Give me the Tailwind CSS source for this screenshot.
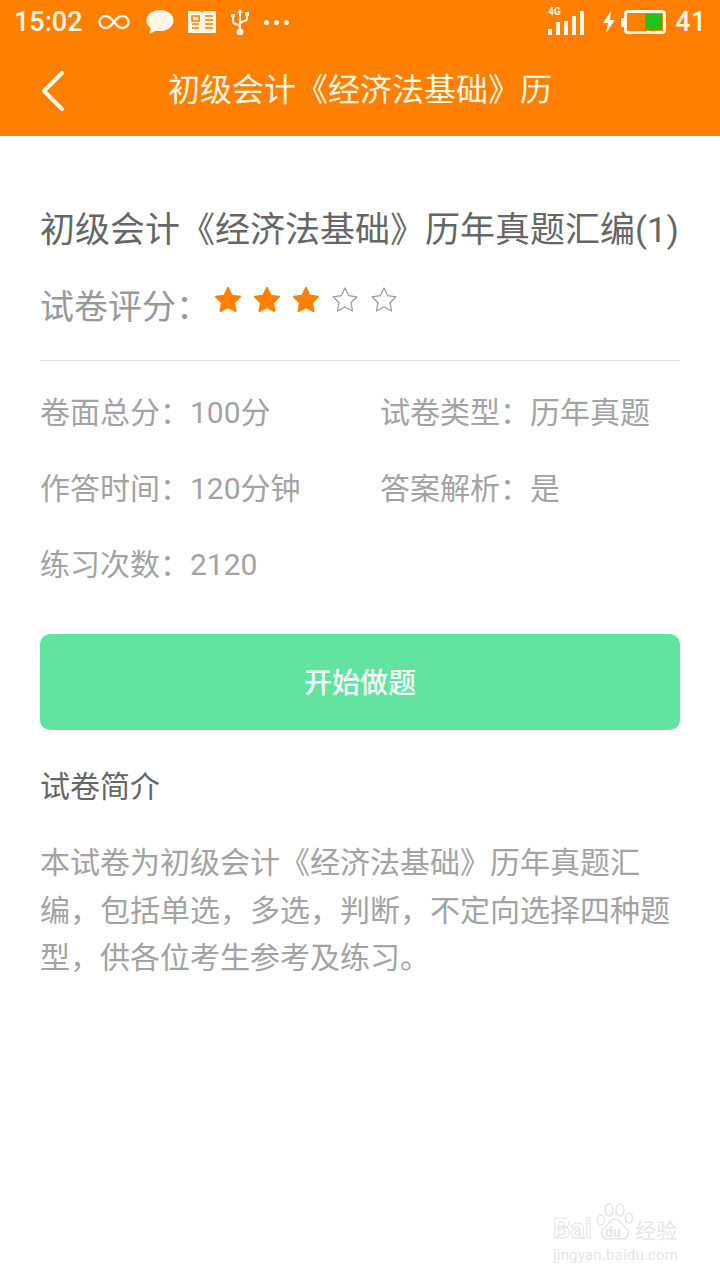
<!DOCTYPE html>
<html lang="zh">
<head>
  <meta charset="UTF-8" />
  <title>试卷详情</title>
  <script src="https://cdn.jsdelivr.net/npm/@tailwindcss/browser@4"></script>
</head>
<body class="bg-white font-['Roboto','Noto_Sans_CJK_SC',sans-serif]">
<div class="relative w-[720px] h-[1280px] overflow-hidden">

  <!-- Header -->
  <header class="h-[136px] bg-[#ff7f00] text-[#fff6e6]">
    <div class="h-[44px] flex items-center pl-[14px] pr-[14px]">
      <span class="text-[27px] font-medium leading-none">15:02</span>
      <svg class="ml-[14px] w-[34px] h-[20px]" viewBox="0 0 34 20" fill="none" stroke="currentColor" stroke-width="2.4"><path d="M17 10c-3-4-5.500-6-8.500-6a6 6 0 0 0 0 12c3 0 5.500-2 8.500-6c3-4 5.500-6 8.500-6a6 6 0 0 1 0 12c-3 0-5.500-2-8.500-6z"/></svg>
      <svg class="ml-[15px] w-[28px] h-[26px]" viewBox="0 0 28 26" fill="currentColor"><ellipse cx="14" cy="11.500" rx="13.500" ry="10.500"/><path d="M5 17l-1.500 8l8-4z"/></svg>
      <svg class="ml-[14px] w-[28px] h-[24px]" viewBox="0 0 28 24"><path fill="currentColor" d="M0 1h12l2 2l2-2h12v22H0z"/><path stroke="#ff7f00" stroke-width="1.600" fill="none" d="M4 6h7v5H4zM4 14h7M4 18h7M17 6h8M17 10h8M17 14h8M17 18h8"/></svg>
      <svg class="ml-[15px] w-[18px] h-[26px]" viewBox="0 0 18 26" fill="none" stroke="currentColor" stroke-width="2"><path d="M9 3v21M2 7v5c0 2 1 3 3 3l4 2M16 6v3c0 2-1 3-3 3l-4 2"/><path fill="currentColor" stroke="none" d="M9 0l3 4H6zM0 5h4v3H0zM14 3h4v4h-4z"/><circle cx="9" cy="23" r="2.500" fill="currentColor"/></svg>
      <div class="ml-[15px] flex gap-[5px]">
        <span class="w-[5px] h-[5px] rounded-full bg-[#fff6e6]"></span>
        <span class="w-[5px] h-[5px] rounded-full bg-[#fff6e6]"></span>
        <span class="w-[5px] h-[5px] rounded-full bg-[#fff6e6]"></span>
      </div>

      <div class="ml-auto flex items-center">
        <div class="relative w-[37px] h-[26px] flex items-end gap-[4px]">
          <span class="absolute left-[0px] top-[-2px] text-[10px] font-bold leading-none">4G</span>
          <span class="w-[4px] h-[6px] bg-[#fff6e6]"></span>
          <span class="w-[4px] h-[13px] bg-[#fff6e6]"></span>
          <span class="w-[4px] h-[14px] bg-[#fff6e6]"></span>
          <span class="w-[4px] h-[19px] bg-[#fff6e6]"></span>
          <span class="w-[4px] h-[24px] bg-[#fff6e6]"></span>
        </div>
        <svg class="ml-[17px] w-[14px] h-[22px]" viewBox="0 0 14 22" fill="currentColor"><path d="M9 0L1 12h5l-2 10l9-13H8z"/></svg>
        <div class="ml-[5px] w-[3px] h-[9px] bg-[#fff6e6]"></div>
        <div class="w-[42px] h-[24px] border-[3px] border-[#fff6e6] rounded-[4px] flex justify-end p-[1px]">
          <div class="w-[17px] bg-[#22c41c]"></div>
        </div>
        <span class="ml-[9px] text-[27px] font-medium leading-none">41</span>
      </div>
    </div>

    <div class="relative h-[92px] flex items-center justify-center">
      <svg class="absolute left-[41px] top-[27px] w-[24px] h-[40px]" viewBox="0 0 24 40" fill="none" stroke="currentColor" stroke-width="4" stroke-linecap="round" stroke-linejoin="round"><path d="M21 2L3 20l18 18"/></svg>
      <h1 class="text-[32px] leading-none whitespace-nowrap">初级会计《经济法基础》历</h1>
    </div>
  </header>

  <!-- Paper info -->
  <main class="px-[40px]">
    <h2 class="mt-[75px] text-[35px] leading-[40px] text-[#666] whitespace-nowrap">初级会计《经济法基础》历年真题汇编(1)</h2>

    <div class="mt-[36px] flex items-start h-[74px]">
      <span class="text-[34px] leading-[40px] text-[#999] whitespace-nowrap">试卷评分：</span>
      <div class="ml-[4px] mt-[-1px] flex gap-[11px]">
        <svg class="w-[28px] h-[28px]" viewBox="0 0 28 28"><path fill="#ff7f00" stroke="#ff7f00" stroke-width="2" stroke-linejoin="round" d="M14 2l3.700 7.700 8.300 1.100-6 5.900 1.500 8.300-7.500-4-7.500 4 1.500-8.300-6-5.900 8.300-1.100z"/></svg>
        <svg class="w-[28px] h-[28px]" viewBox="0 0 28 28"><path fill="#ff7f00" stroke="#ff7f00" stroke-width="2" stroke-linejoin="round" d="M14 2l3.700 7.700 8.300 1.100-6 5.900 1.500 8.300-7.500-4-7.500 4 1.500-8.300-6-5.900 8.300-1.100z"/></svg>
        <svg class="w-[28px] h-[28px]" viewBox="0 0 28 28"><path fill="#ff7f00" stroke="#ff7f00" stroke-width="2" stroke-linejoin="round" d="M14 2l3.700 7.700 8.300 1.100-6 5.900 1.500 8.300-7.500-4-7.500 4 1.500-8.300-6-5.900 8.300-1.100z"/></svg>
        <svg class="w-[28px] h-[28px]" viewBox="0 0 28 28"><path fill="none" stroke="#999" stroke-width="1.200" stroke-linejoin="round" d="M14 2l3.700 7.700 8.300 1.100-6 5.900 1.500 8.300-7.500-4-7.500 4 1.500-8.300-6-5.900 8.300-1.100z"/></svg>
        <svg class="w-[28px] h-[28px]" viewBox="0 0 28 28"><path fill="none" stroke="#999" stroke-width="1.200" stroke-linejoin="round" d="M14 2l3.700 7.700 8.300 1.100-6 5.900 1.500 8.300-7.500-4-7.500 4 1.500-8.300-6-5.900 8.300-1.100z"/></svg>
      </div>
    </div>
    <div class="mt-[-1px] h-px bg-[#e3e3e3]"></div>

    <div class="mt-[33px] grid grid-cols-[340px_1fr] gap-y-[38px] text-[30px] leading-[38px] text-[#a3a3a3]">
      <div>卷面总分：100分</div>
      <div>试卷类型：历年真题</div>
      <div>作答时间：120分钟</div>
      <div>答案解析：是</div>
      <div>练习次数：2120</div>
    </div>

    <button class="mt-[50px] w-full h-[96px] pt-[4px] rounded-[10px] bg-[#62e3a0] text-[28px] font-medium text-[#fdfdfd]">开始做题</button>

    <h3 class="mt-[37px] text-[30px] leading-[40px] text-[#666]">试卷简介</h3>
    <p class="mt-[32px] text-[30px] leading-[47.500px] text-[#a3a3a3]">本试卷为初级会计《经济法基础》历年真题汇编，包括单选，多选，判断，不定向选择四种题型，供各位考生参考及练习。</p>
  </main>

  <!-- Watermark -->
  <div class="absolute left-[553px] top-[1203px] w-[128px] text-[#e6e6e6]">
    <svg class="absolute left-[43px] top-0 w-[38px] h-[38px]" viewBox="0 0 38 38" fill="none" stroke="currentColor" stroke-width="1.500">
      <ellipse cx="5" cy="17" rx="3.500" ry="5"/><ellipse cx="13" cy="7" rx="4" ry="6"/><ellipse cx="24" cy="7" rx="4" ry="6"/><ellipse cx="33" cy="15" rx="3.500" ry="5"/>
      <path d="M19 16c-5 0-6 5-11 9c-5 4-1 12 5 11c3-.5 9-.5 12 0c6 1 10-7 5-11c-5-4-6-9-11-9z"/>
    </svg>
    <div class="relative flex items-end h-[40px] leading-none">
      <span class="text-[27px] font-bold text-white [-webkit-text-stroke:1px_#e6e6e6]">Bai</span>
      <span class="absolute left-[52px] top-[22px] text-[14px] font-bold">du</span>
      <span class="absolute left-[82px] top-[18px] text-[21px] whitespace-nowrap">经验</span>
    </div>
    <div class="mt-[5px] text-[15px] leading-none tracking-[0.2px] whitespace-nowrap">jingyan.baidu.com</div>
  </div>
</div>
</body>
</html>
